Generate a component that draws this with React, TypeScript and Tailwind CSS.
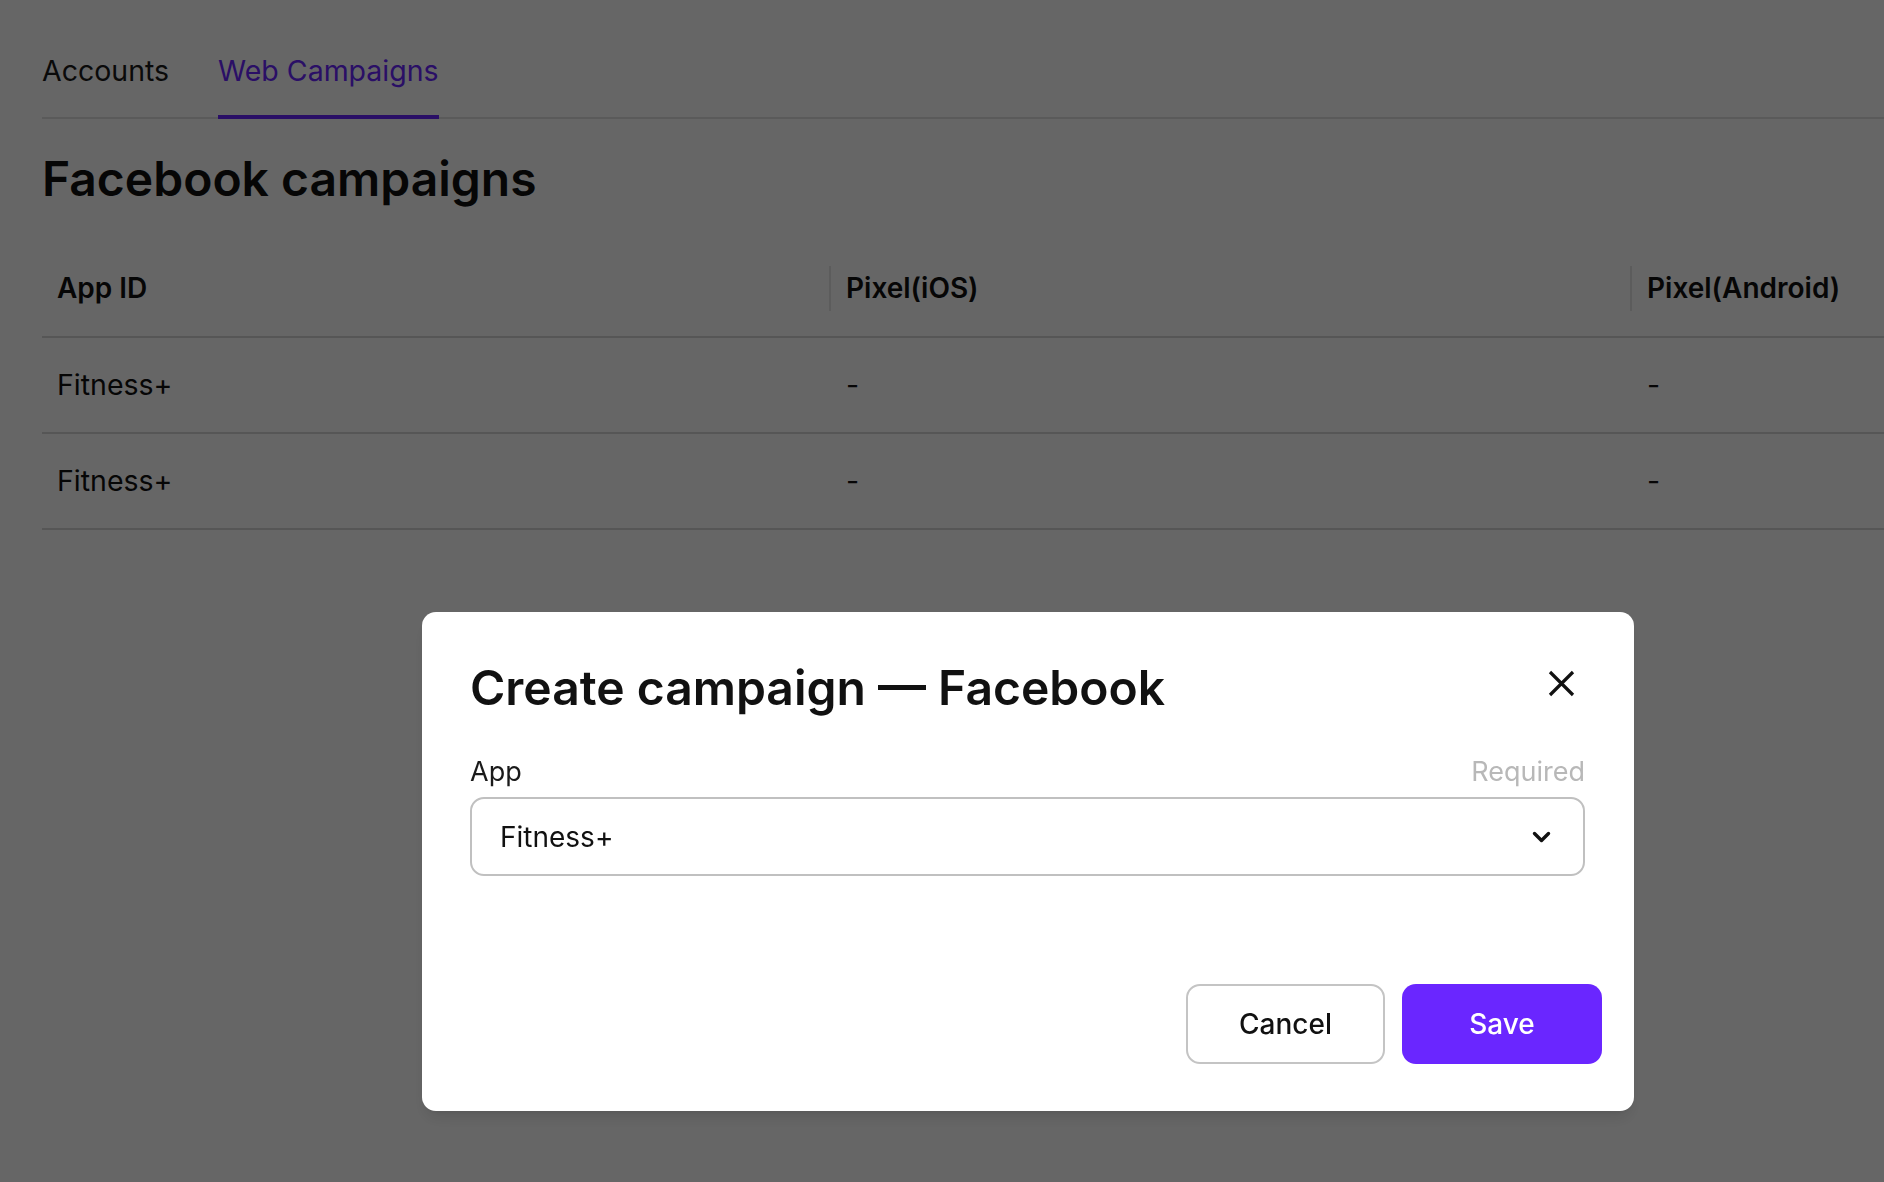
import { useState } from "react";

interface CampaignRow {
  id: string;
  app: string;
  pixelIos: string;
  pixelAndroid: string;
}

const rows: CampaignRow[] = [
  { id: "1", app: "Fitness+", pixelIos: "-", pixelAndroid: "-" },
  { id: "2", app: "Fitness+", pixelIos: "-", pixelAndroid: "-" },
];

function Tabs() {
  const [active, setActive] = useState("web");

  return (
    <nav className="flex items-start gap-[49px] border-b-2 border-[#e0e0e0]">
      <button
        type="button"
        onClick={() => setActive("accounts")}
        className={`text-[28.5px] leading-[34px] ${
          active === "accounts"
            ? "-mb-[2px] border-b-4 border-[#6a26ff] pb-[27px] text-[#6a26ff]"
            : "pb-[29px] text-[#1a1a1a]"
        }`}
      >
        Accounts
      </button>
      <button
        type="button"
        onClick={() => setActive("web")}
        className={`text-[28.5px] leading-[34px] ${
          active === "web"
            ? "-mb-[2px] border-b-4 border-[#6a26ff] pb-[27px] text-[#6a26ff]"
            : "pb-[29px] text-[#1a1a1a]"
        }`}
      >
        Web Campaigns
      </button>
    </nav>
  );
}

function HeaderCell({ label, divider }: { label: string; divider?: boolean }) {
  return (
    <div className="flex items-center">
      {divider && <span className="h-[45px] w-[2px] bg-[#e6e6e6]" />}
      <span className="pl-[15px]">{label}</span>
    </div>
  );
}

function CampaignTable() {
  return (
    <div className="mt-[32px]">
      <div className="grid h-[98px] grid-cols-[787px_801px_1fr] border-b-2 border-[#d6d6d6] text-[28px] font-semibold text-[#111]">
        <HeaderCell label="App ID" />
        <HeaderCell label="Pixel(iOS)" divider />
        <HeaderCell label="Pixel(Android)" divider />
      </div>
      {rows.map((row) => (
        <div
          key={row.id}
          className="grid h-[96px] grid-cols-[787px_801px_1fr] items-center border-b-2 border-[#d6d6d6] text-[28.5px] text-[#111]"
        >
          <span className="pl-[15px]">{row.app}</span>
          <span className="pl-[17px]">{row.pixelIos}</span>
          <span className="pl-[17px]">{row.pixelAndroid}</span>
        </div>
      ))}
    </div>
  );
}

function CreateCampaignModal() {
  return (
    <div className="fixed inset-0 bg-black/60 pl-[422px] pt-[612px]">
      <div className="flex h-[499px] w-[1212px] flex-col rounded-[14px] bg-white shadow-lg">
        <div className="pl-[48px] pr-[49px] pt-[47px]">
          <div className="flex items-start justify-between">
            <h2 className="text-[48px] font-semibold leading-[58px] text-[#111]">
              Create campaign — Facebook
            </h2>
            <button type="button" className="mr-[10px] mt-[11px] text-[#111]">
              <svg width="27" height="27" viewBox="0 0 27 27" fill="none">
                <path d="M2 2 25 25M25 2 2 25" stroke="currentColor" strokeWidth="3.2" />
              </svg>
            </button>
          </div>

          <div className="mt-[39px] flex items-center justify-between text-[27px] leading-[32px]">
            <span className="text-[#1a1a1a]">App</span>
            <span className="text-[#b8b8b8]">Required</span>
          </div>

          <button
            type="button"
            className="mt-[9px] flex h-[79px] w-full items-center justify-between rounded-[14px] border-2 border-[#c0c0c0] pl-[28px] pr-[32px] text-[28px] text-[#111]"
          >
            <span>Fitness+</span>
            <svg width="19" height="12" viewBox="0 0 19 12" fill="none">
              <path
                d="M2.5 2.5 9.5 9.5 16.5 2.5"
                stroke="currentColor"
                strokeWidth="3.4"
                strokeLinecap="round"
                strokeLinejoin="round"
              />
            </svg>
          </button>
        </div>

        <div className="mt-[108px] flex justify-end gap-[17px] pr-[32px]">
          <button
            type="button"
            className="h-[80px] w-[199px] rounded-[14px] border-2 border-[#c4c4c4] text-[28px] font-medium text-[#111]"
          >
            Cancel
          </button>
          <button
            type="button"
            className="h-[80px] w-[200px] rounded-[14px] bg-[#6a26ff] text-[28px] font-medium text-white"
          >
            Save
          </button>
        </div>
      </div>
    </div>
  );
}

export default function App() {
  return (
    <div className="relative min-h-screen overflow-hidden bg-white font-['Inter',sans-serif] text-[#111]">
      <div className="pl-[42px] pt-[54px]">
        <Tabs />
        <h1 className="mt-[31px] text-[48px] font-semibold leading-[58px] text-[#111]">
          Facebook campaigns
        </h1>
        <CampaignTable />
      </div>
      <CreateCampaignModal />
    </div>
  );
}
